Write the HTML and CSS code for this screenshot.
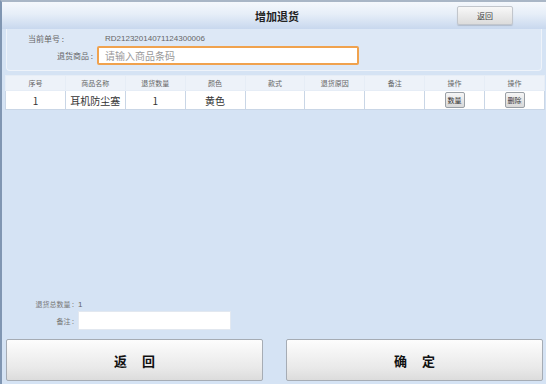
FILE: index.html
```html
<!DOCTYPE html>
<html lang="zh">
<head>
    <meta charset="UTF-8">
    <title>增加退货</title>
    <link rel="stylesheet" href="styles.css">
</head>
<body>
    <div class="page">
        <div class="titlebar">
            <span></span>
            <h1>增加退货</h1>
            <button class="top-btn">返回</button>
        </div>

        <div class="info-panel">
            <div class="info-row">
                <span class="label">当前单号 :</span>
                <span class="value">RD21232014071124300006</span>
            </div>
            <div class="info-row">
                <span class="label label-right">退货商品 :</span>
                <input class="code-input" type="text" placeholder="请输入商品条码">
            </div>
        </div>

        <table class="goods">
            <thead>
                <tr>
                    <th>序号</th>
                    <th>商品名称</th>
                    <th>退货数量</th>
                    <th>颜色</th>
                    <th>款式</th>
                    <th>退货原因</th>
                    <th>备注</th>
                    <th>操作</th>
                    <th>操作</th>
                </tr>
            </thead>
            <tbody>
                <tr>
                    <td>1</td>
                    <td>耳机防尘塞</td>
                    <td>1</td>
                    <td>黄色</td>
                    <td></td>
                    <td></td>
                    <td></td>
                    <td><button class="cell-btn">数量</button></td>
                    <td><button class="cell-btn">删除</button></td>
                </tr>
            </tbody>
        </table>

        <div class="spacer"></div>

        <div class="summary">
            <div class="sum-row">
                <span class="sum-label">退货总数量 :</span>
                <span class="sum-value">1</span>
            </div>
            <div class="sum-row">
                <span class="sum-label sum-label-note">备注 :</span>
                <input class="note-input" type="text">
            </div>
        </div>

        <div class="actions">
            <button class="big-btn">返 回</button>
            <button class="big-btn">确 定</button>
        </div>
    </div>
</body>
</html>
```

FILE: styles.css
```css
* {
    box-sizing: border-box;
    margin: 0;
    padding: 0;
    font-family: "Noto Sans CJK SC", "Liberation Sans", sans-serif;
}

body {
    width: 546px;
    height: 384px;
    overflow: hidden;
    background: #d5e3f4;
}

.page {
    display: flex;
    flex-direction: column;
    height: 384px;
    border-left: 2px solid #8096b2;
    border-top: 2px solid #a9b6c6;
}

.titlebar {
    display: grid;
    grid-template-columns: 1fr auto 1fr;
    align-items: center;
    height: 27px;
    background: linear-gradient(#f5f8fc 0%, #e6eef8 45%, #c8d8ee 100%);
}

.titlebar h1 {
    font-size: 11px;
    font-weight: bold;
    color: #222;
    padding-left: 6px;
}

.top-btn {
    justify-self: end;
    margin-right: 33px;
    width: 56px;
    height: 19px;
    font-size: 8px;
    color: #444;
    background: linear-gradient(#f8f8f8, #dcdcdc);
    border: 1px solid #c2c6cc;
    border-radius: 2px;
    box-shadow: 0 1px 1px rgba(0, 0, 0, 0.15);
}

.info-panel {
    margin: 0 4px 0 4px;
    padding: 2px 0 3px 0;
    height: 42px;
    background: #dde8f6;
    border: 1px solid #eef3fa;
    border-top: none;
    border-radius: 0 0 4px 4px;
}

.info-row {
    display: flex;
    align-items: center;
}

.info-row:first-child {
    height: 14px;
}

.label {
    width: 94px;
    padding-left: 21px;
    font-size: 8px;
    color: #666;
}

.label-right {
    width: 90px;
    padding-left: 0;
    padding-right: 4px;
    text-align: right;
}

.value {
    padding-left: 4px;
    font-size: 8px;
    color: #666;
    font-family: "Liberation Sans", sans-serif;
}

.code-input {
    width: 262px;
    height: 19px;
    margin-top: 1px;
    padding-left: 6px;
    font-size: 10px;
    border: 2px solid #f0a24e;
    border-radius: 2px;
    background: #fff;
    outline: none;
}

.code-input::placeholder {
    color: #999;
}

.goods {
    margin: 4px 0 0 3px;
    width: 540px;
    table-layout: fixed;
    border-collapse: collapse;
}

.goods th,
.goods td {
    border: 1px solid #e6edf6;
    text-align: center;
    color: #333;
}

.goods th {
    height: 15px;
    font-size: 7px;
    font-weight: normal;
    color: #666;
    background: #edf2f9;
}

.goods td {
    height: 19px;
    font-size: 10px;
    background: #fff;
    border-color: #c9d6e6;
}

.cell-btn {
    display: block;
    margin: 0 auto;
    width: 20px;
    height: 16px;
    font-size: 7px;
    color: #333;
    background: linear-gradient(#f6f6f6, #d9d9d9);
    border: 1px solid #9aa0a6;
    border-radius: 2px;
}

.spacer {
    flex: 1;
}

.summary {
    display: flex;
    flex-direction: column;
    gap: 2px;
    margin-bottom: 9px;
}

.sum-row {
    display: flex;
    align-items: center;
}

.sum-label {
    width: 76px;
    text-align: right;
    padding-right: 4px;
    font-size: 7px;
    color: #777;
}

.sum-value {
    font-size: 8px;
    color: #666;
    font-family: "Liberation Sans", sans-serif;
}

.note-input {
    width: 153px;
    height: 19px;
    border: 1px solid #e2e8f0;
    background: #fff;
    outline: none;
}

.actions {
    display: flex;
    justify-content: space-between;
    padding: 0 3px 3px 4px;
}

.big-btn {
    width: 257px;
    height: 42px;
    font-size: 13px;
    font-weight: bold;
    color: #111;
    letter-spacing: 6px;
    text-indent: 6px;
    background: linear-gradient(#fdfdfd, #e9e9e9 70%, #dcdcdc);
    border: 1px solid #a6acb4;
    border-radius: 2px;
}
```
